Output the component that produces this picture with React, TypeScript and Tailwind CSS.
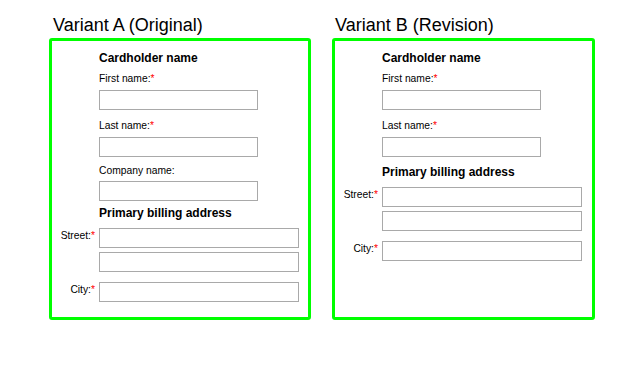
import type { ReactNode } from 'react';

function Req() {
  return <span className="text-[#ff0000]">*</span>;
}

function Heading({ children, top }: { children: ReactNode; top: string }) {
  return <div className={`${top} ml-[47px] text-[12px] font-bold leading-[14px]`}>{children}</div>;
}

// label above the input (name fields)
function StackedField({ label, required, labelTop, inputTop }: { label: string; required?: boolean; labelTop: string; inputTop: string }) {
  return (
    <div className="ml-[47px]">
      <div className={`${labelTop} text-[10.3px] leading-[12px]`}>
        {label}
        {required && <Req />}
      </div>
      <input type="text" className={`${inputTop} block h-[20px] w-[159px] border border-[#a9a9a9] bg-white`} />
    </div>
  );
}

// label on the left, right aligned (address fields)
function InlineField({ label, top }: { label?: string; top: string }) {
  return (
    <div className={`${top} flex`}>
      <div className="w-[47px] shrink-0 pr-[4px] pt-[2px] text-right text-[10.3px] leading-[12px]">
        {label && (
          <>
            {label}
            <Req />
          </>
        )}
      </div>
      <input type="text" className="block h-[20px] w-[200px] border border-[#a9a9a9] bg-white" />
    </div>
  );
}

export default function App() {
  return (
    <div className="min-h-[365px] w-[619px] bg-white font-['Liberation_Sans',Arial,sans-serif] text-black">
      <div className="grid grid-cols-[262px_263px] gap-x-[21px] pl-[49px] pt-[15px]">
        <h2 className="pl-[4px] text-[18px] leading-[20px]">Variant A (Original)</h2>
        <h2 className="pl-[3px] text-[18px] leading-[20px]">Variant B (Revision)</h2>

        {/* Variant A */}
        <div className="mt-[3px] rounded-[3px] border-[3px] border-[#00ff00] pb-[15px] pt-[10px]">
          <Heading top="mt-0">Cardholder name</Heading>
          <StackedField label="First name:" required labelTop="mt-[8px]" inputTop="mt-[5px]" />
          <StackedField label="Last name:" required labelTop="mt-[10px]" inputTop="mt-[5px]" />
          <StackedField label="Company name:" labelTop="mt-[8px]" inputTop="mt-[4px]" />
          <Heading top="mt-[5px]">Primary billing address</Heading>
          <InlineField label="Street:" top="mt-[8px]" />
          <InlineField top="mt-[4px]" />
          <InlineField label="City:" top="mt-[10px]" />
        </div>

        {/* Variant B */}
        <div className="mt-[3px] rounded-[3px] border-[3px] border-[#00ff00] pb-[15px] pt-[10px]">
          <Heading top="mt-0">Cardholder name</Heading>
          <StackedField label="First name:" required labelTop="mt-[8px]" inputTop="mt-[5px]" />
          <StackedField label="Last name:" required labelTop="mt-[10px]" inputTop="mt-[5px]" />
          <Heading top="mt-[8px]">Primary billing address</Heading>
          <InlineField label="Street:" top="mt-[8px]" />
          <InlineField top="mt-[4px]" />
          <InlineField label="City:" top="mt-[10px]" />
        </div>
      </div>
    </div>
  );
}
